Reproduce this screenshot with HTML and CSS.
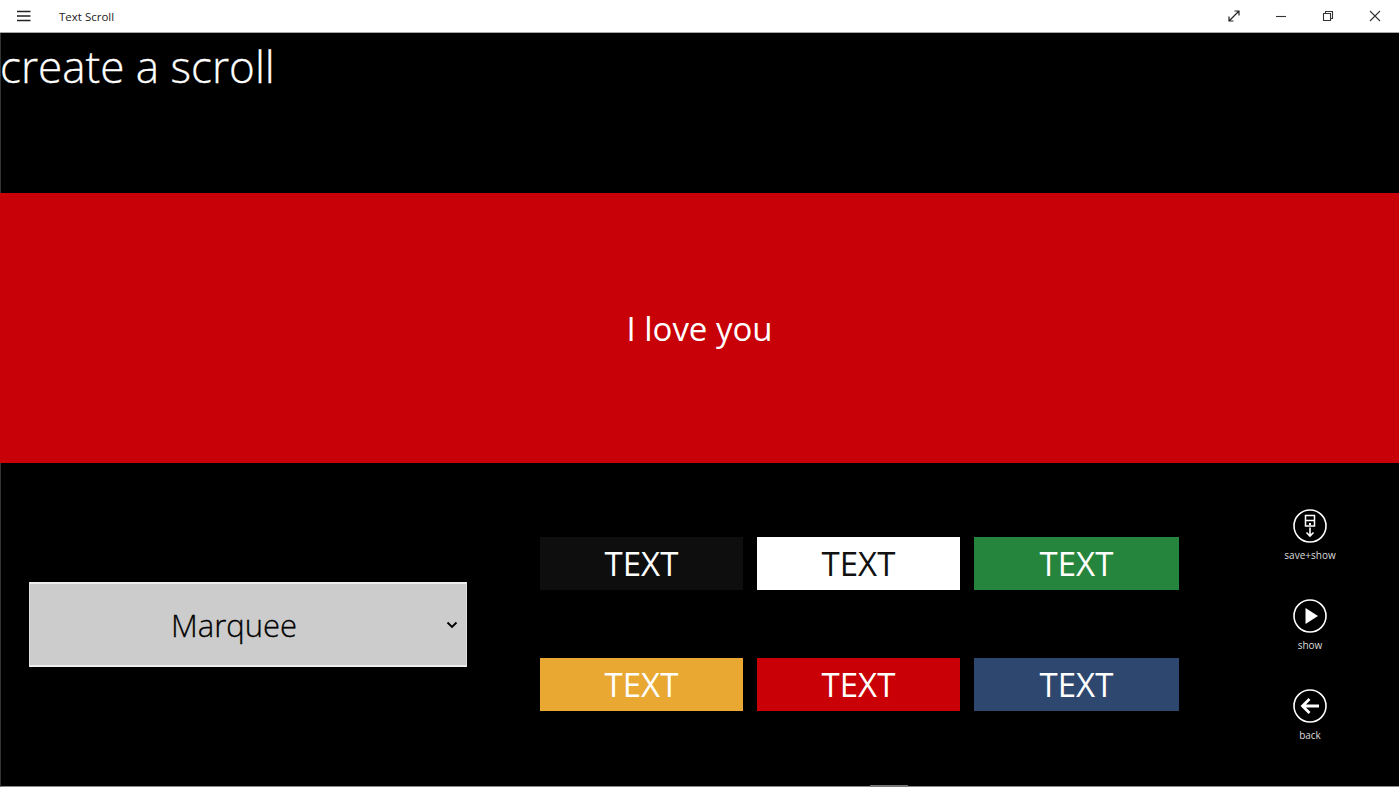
FILE: index.html
```html
<!DOCTYPE html>
<html lang="en">
<head>
  <meta charset="UTF-8">
  <title>Text Scroll</title>
  <meta name="viewport" content="width=device-width, initial-scale=1.0">
  <link rel="stylesheet" href="styles.css">
</head>
<body>

  <div class="titlebar">
    <svg class="menu-icon" width="14" height="12" viewBox="0 0 14 12">
      <path d="M0 1.5h13.5M0 6h13.5M0 10.5h13.5" stroke="#222" stroke-width="1.3" fill="none"/>
    </svg>
    <span class="app-name">Text Scroll</span>
    <div class="window-buttons">
      <svg width="14" height="14" viewBox="0 0 14 14">
        <path d="M2 12L12 2M7.5 2H12V6.5M2 7.5V12H6.5" stroke="#222" stroke-width="1.2" fill="none"/>
      </svg>
      <svg width="14" height="14" viewBox="0 0 14 14">
        <path d="M2 7.5H12" stroke="#333" stroke-width="1.1" fill="none"/>
      </svg>
      <svg width="14" height="14" viewBox="0 0 14 14">
        <path d="M2.5 4.5H9.5V11.5H2.5ZM4.5 4.5V2.5H11.5V9.5H9.5" stroke="#333" stroke-width="1.1" fill="none"/>
      </svg>
      <svg width="14" height="14" viewBox="0 0 14 14">
        <path d="M2 2L12 12M12 2L2 12" stroke="#333" stroke-width="1.1" fill="none"/>
      </svg>
    </div>
  </div>

  <div class="page">
    <h1>create a scroll</h1>

    <div class="preview">I love you</div>

    <div class="controls">
      <div class="effect-select">
        <span class="effect-name">Marquee</span>
        <svg class="chevron" width="12" height="8" viewBox="0 0 12 8">
          <path d="M1.5 1.5L6 6L10.5 1.5" stroke="#000" stroke-width="1.9" fill="none"/>
        </svg>
      </div>

      <div class="swatches">
        <div class="swatch swatch-black">TEXT</div>
        <div class="swatch swatch-white">TEXT</div>
        <div class="swatch swatch-green">TEXT</div>
        <div class="swatch swatch-orange">TEXT</div>
        <div class="swatch swatch-red">TEXT</div>
        <div class="swatch swatch-navy">TEXT</div>
      </div>

      <div class="actions">
        <div class="action">
          <svg width="34" height="34" viewBox="0 0 34 34">
            <circle cx="17" cy="17" r="16" stroke="#fff" stroke-width="1.6" fill="none"/>
            <path d="M12.5 6.5H21.5V17H12.5ZM12.5 11.5H21.5" stroke="#fff" stroke-width="1.5" fill="none"/>
            <rect x="16" y="14" width="2" height="2" fill="#fff"/>
            <path d="M17 18.5V27M13.5 23.5L17 27L20.5 23.5" stroke="#fff" stroke-width="1.6" fill="none"/>
          </svg>
          <span>save+show</span>
        </div>
        <div class="action">
          <svg width="34" height="34" viewBox="0 0 34 34">
            <circle cx="17" cy="17" r="16" stroke="#fff" stroke-width="1.6" fill="none"/>
            <path d="M12.5 9L25 17L12.5 25Z" fill="#fff"/>
          </svg>
          <span>show</span>
        </div>
        <div class="action">
          <svg width="34" height="34" viewBox="0 0 34 34">
            <circle cx="17" cy="17" r="16" stroke="#fff" stroke-width="1.6" fill="none"/>
            <path d="M26 17H10M16.5 10L9.5 17L16.5 24" stroke="#fff" stroke-width="2.8" fill="none"/>
          </svg>
          <span>back</span>
        </div>
      </div>
    </div>

    <div class="scroll-thumb"></div>
  </div>

</body>
</html>
```

FILE: styles.css
```css
html, body {
  height: 100%;
}
body {
  margin: 0;
  font-family: "Open Sans", "Noto Sans", sans-serif;
  background-color: #000;
  overflow: hidden;
}
.titlebar {
  height: 32px;
  background-color: #fff;
  border-bottom: 1px solid #a8a8a8;
  display: flex;
  align-items: center;
  color: #222;
}
.menu-icon {
  margin-left: 17px;
}
.app-name {
  margin-left: 28px;
  font-size: 11.5px;
}
.window-buttons {
  margin-left: auto;
  margin-right: 17px;
  display: flex;
  gap: 33px;
}
.page {
  height: 753px;
  border-left: 1px solid #333;
  border-bottom: 1px solid #8a8a8a;
  position: relative;
  display: flex;
  flex-direction: column;
}
h1 {
  height: 160px;
  margin: 0 0 0 -1px;
  color: #fff;
  font-size: 44px;
  font-weight: 300;
  line-height: 66px;
  -webkit-text-stroke: 0.3px #fff;
}
.preview {
  height: 270px;
  margin-left: -1px;
  background-color: #c80008;
  color: #fff;
  font-size: 33px;
  display: flex;
  align-items: center;
  justify-content: center;
}
.controls {
  flex: 1;
  display: flex;
}
.effect-select {
  width: 438px;
  height: 85px;
  box-sizing: border-box;
  margin: 119px 0 0 28px;
  padding-right: 28px;
  background-color: #ccc;
  border-top: 2px solid #eee;
  border-bottom: 2px solid #eee;
  border-left: 1px solid #ddd;
  border-right: 1px solid #ddd;
  display: flex;
  align-items: center;
  justify-content: center;
  position: relative;
  color: #000;
  font-size: 31px;
  font-weight: 300;
  -webkit-text-stroke: 0.3px #000;
}
.chevron {
  position: absolute;
  right: 8px;
  top: 37px;
}
.swatches {
  width: 639px;
  margin: 74px 0 0 73px;
  display: grid;
  grid-template-columns: 203px 203px 205px;
  grid-auto-rows: 53px;
  column-gap: 14px;
  row-gap: 68px;
}
.swatch {
  color: #fff;
  font-size: 33px;
  display: flex;
  align-items: center;
  justify-content: center;
}
.swatch-black { background-color: #0e0e0e; }
.swatch-white { background-color: #fff; color: #111; }
.swatch-green { background-color: #26853c; }
.swatch-orange { background-color: #e8a832; }
.swatch-red { background-color: #c90005; }
.swatch-navy { background-color: #2e476f; }
.actions {
  width: 100px;
  margin: 46px 0 0 81px;
  display: flex;
  flex-direction: column;
}
.action {
  height: 90px;
  display: flex;
  flex-direction: column;
  align-items: center;
  color: #ddd;
  font-size: 10px;
}
.action span {
  margin-top: 5px;
}
.scroll-thumb {
  position: absolute;
  left: 869px;
  bottom: -1px;
  width: 38px;
  height: 2px;
  background-color: #777;
}
```
